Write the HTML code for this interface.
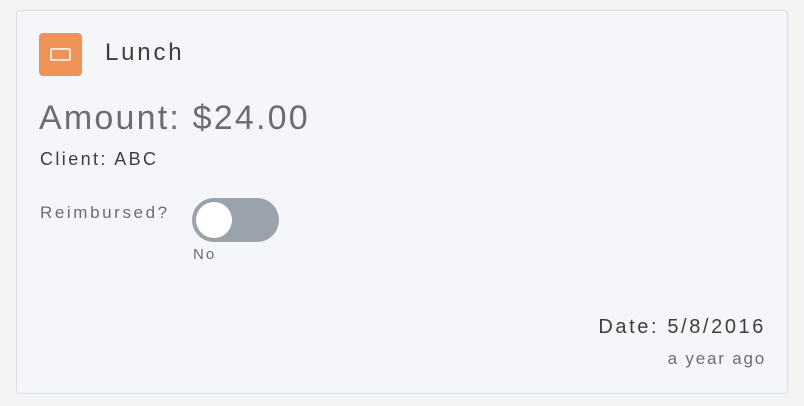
<!DOCTYPE html>
<html><head><style>
html,body{margin:0;padding:0;width:804px;height:406px;background:#f4f4f4;overflow:hidden;font-family:"Liberation Sans",sans-serif}
.card{position:absolute;left:16px;top:10px;width:770px;height:382px;background:#f5f6fa;border:1px solid #d8dde6;border-radius:4px}
.icon{position:absolute;left:39px;top:33px;width:43px;height:43px;background:#ee9257;border-radius:4px}
.icon div{position:absolute;left:11px;top:15px;width:17px;height:9px;border:2.5px solid #fde5d3;border-radius:2px}
.t{position:absolute;white-space:nowrap}
.tog{position:absolute;left:192px;top:198px;width:87px;height:44px;border-radius:22px;background:#9aa2ab}
.tog div{position:absolute;left:4px;top:4px;width:36px;height:36px;border-radius:50%;background:#fff}
</style></head><body>
<div class="card"></div>
<div class="icon"><div></div></div>
<div class="t" style="left:105px;top:39px;font-size:24px;letter-spacing:2.8px;color:#3e3e3c">Lunch</div>
<div class="t" style="left:39px;top:99px;font-size:34px;letter-spacing:2.2px;color:#6b6d70">Amount: $24.00</div>
<div class="t" style="left:40px;top:149px;font-size:18px;letter-spacing:2.4px;color:#3e3e3c">Client: ABC</div>
<div class="t" style="left:40px;top:203px;font-size:17px;letter-spacing:2.6px;color:#6b6d70">Reimbursed?</div>
<div class="tog"><div></div></div>
<div class="t" style="left:193px;top:246px;font-size:15px;letter-spacing:2px;color:#6b6d70">No</div>
<div class="t" style="right:38px;top:316px;font-size:20px;letter-spacing:2.6px;color:#3e3e3c">Date: 5/8/2016</div>
<div class="t" style="right:38px;top:349px;font-size:17px;letter-spacing:1.8px;color:#6b6d70">a year ago</div>
</body></html>
